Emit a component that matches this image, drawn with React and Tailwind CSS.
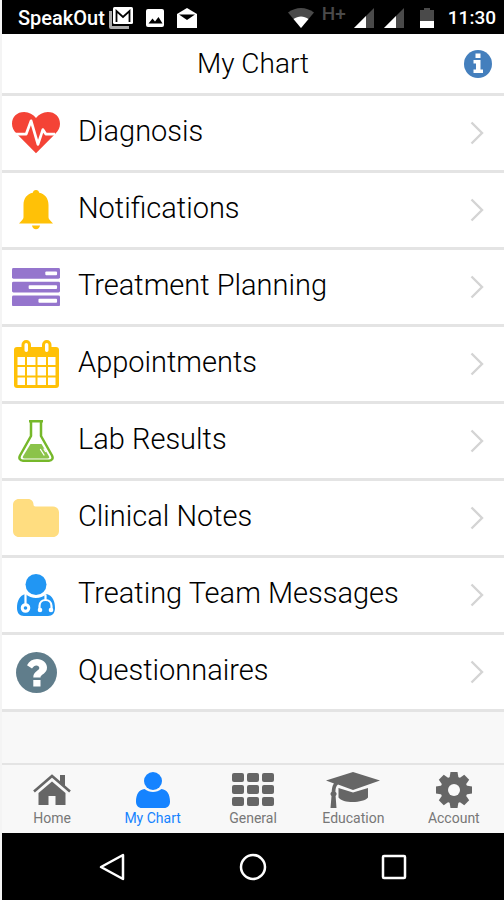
function InfoIcon() {
  return (
    <svg viewBox="0 0 28 28" className="w-7" aria-hidden="true">
      <circle cx="14" cy="14" r="14" fill="#447fbd" />
      <path fill="#fff" d="M11.500 3.500h5v4.500h-5zM9.500 10h7v9.500h2.500v3.500H9.500v-3.500h2.500v-6H9.500z" />
    </svg>
  );
}

function HeartIcon() {
  return (
    <svg viewBox="0 0 49 42" className="w-[49px]" aria-hidden="true">
      <path
        fill="#f44336"
        d="M24.500 42 5 22.500C1.500 19 0 16 0 12 0 5 5 0 12.500 0c5 0 9 2.500 12 6 3-3.500 7-6 12-6C44 0 49 5 49 12c0 4-1.500 7-5 10.500z"
      />
      <path
        fill="none"
        stroke="#fff"
        strokeWidth="2.800"
        strokeLinejoin="round"
        d="M2 22.500h12.500L19.500 9l7 24 5-15 3 4.500H44"
      />
    </svg>
  );
}

function BellIcon() {
  return (
    <svg viewBox="0 0 34 40" className="w-[34px]" aria-hidden="true">
      <path
        fill="#ffc107"
        d="M17 0c1.800 0 3 1.100 3.200 2.800C26 4 29.500 8.500 29.500 15v12c0 1.500.6 2.300 1.500 3.200l3 3.300H0l3-3.300c.9-.9 1.500-1.700 1.500-3.200V15C4.500 8.500 8 4 13.800 2.800 14 1.100 15.200 0 17 0zM13 35.500h8c-.3 2.200-2 3.700-4 3.700s-3.700-1.500-4-3.700z"
      />
    </svg>
  );
}

function TasksIcon() {
  return (
    <svg viewBox="0 0 49 39" className="w-[49px]" aria-hidden="true">
      <g fill="#9575cd">
        <rect width="49" height="11" rx="1.500" />
        <rect y="14" width="49" height="11" rx="1.500" />
        <rect y="28" width="49" height="11" rx="1.500" />
      </g>
      <g fill="#fff">
        <rect x="34" y="3.500" width="12" height="4" rx="1" />
        <rect x="17" y="17.500" width="29" height="4" rx="1" />
        <rect x="27" y="31.500" width="19" height="4" rx="1" />
      </g>
    </svg>
  );
}

function CalendarIcon() {
  return (
    <svg viewBox="0 0 45 48" className="w-[45px]" aria-hidden="true">
      <rect y="7" width="45" height="41" rx="3" fill="#ffc107" />
      <g fill="#fff" stroke="#ffc107" strokeWidth="3">
        <rect x="9" y="1.500" width="6.500" height="12" rx="3.200" />
        <rect x="29.500" y="1.500" width="6.500" height="12" rx="3.200" />
      </g>
      <g fill="#fff">
        <path d="M3.500 17h7.500v8H3.500zM13 17h8.500v8H13zM23.500 17h8.500v8h-8.500zM34 17h7.500v8H34z" />
        <path d="M3.500 27h7.500v8.500H3.500zM13 27h8.500v8.500H13zM23.500 27h8.500v8.500h-8.500zM34 27h7.500v8.500H34z" />
        <path d="M3.500 37.500h7.500V45H3.500zM13 37.500h8.500V45H13zM23.500 37.500h8.500V45h-8.500zM34 37.500h7.500V45H34z" />
      </g>
    </svg>
  );
}

function FlaskIcon() {
  return (
    <svg viewBox="0 0 36 42" className="w-9" aria-hidden="true">
      <path
        fill="none"
        stroke="#76b82a"
        strokeWidth="2.500"
        strokeLinejoin="round"
        d="M11 1.300h14M13 2v14L2 35.500c-1.500 3 0 5.200 3 5.200h26c3 0 4.500-2.200 3-5.200L23 16V2"
      />
      <path
        fill="#8bc34a"
        d="M12.500 24h11l7.300 12c1 1.700.3 2.500-1.300 2.500h-23c-1.600 0-2.300-.8-1.300-2.500z"
      />
      <path stroke="#fff" strokeWidth="1.300" strokeLinecap="round" d="m22.500 29.500 3.500 5.500M26 29l1.500 2.500" />
    </svg>
  );
}

function FolderIcon() {
  return (
    <svg viewBox="0 0 46 38" className="w-[46px]" aria-hidden="true">
      <path
        fill="#ffdd80"
        d="M6 0h9c3.500 0 5.500 2.500 5.500 5.500 0 1.300.7 2 2 2H40c3.500 0 6 2.500 6 6V32c0 3.500-2.500 6-6 6H6c-3.500 0-6-2.500-6-6V6c0-3.500 2.500-6 6-6z"
      />
    </svg>
  );
}

function DoctorIcon() {
  return (
    <svg viewBox="0 0 38 42" className="w-[38px]" aria-hidden="true">
      <g fill="#2196f3">
        <circle cx="19" cy="10.500" r="10.500" />
        <path d="M8.500 20c6 5.300 15 5.300 21 0 6 1.500 8.500 7 8.500 14 0 5-2.500 8-7 8H7c-4.500 0-7-3-7-8 0-7 2.500-12.500 8.500-14z" />
      </g>
      <g fill="none" stroke="#fff" strokeWidth="2.200">
        <path d="M8.500 20v11M28.500 20.500v5M22.500 36v-4c0-8 12-8 12 0v4" />
        <circle cx="8.500" cy="34" r="3.300" strokeWidth="3" />
      </g>
      <g fill="#fff">
        <circle cx="23" cy="36" r="2.300" />
        <circle cx="34" cy="36" r="2.300" />
      </g>
    </svg>
  );
}

function QuestionIcon() {
  return (
    <svg viewBox="0 0 41 41" className="w-[41px]" aria-hidden="true">
      <circle cx="20.500" cy="20.500" r="20.500" fill="#607d8b" />
      <path
        fill="#fff"
        d="M11 13.200C13.300 9 16.500 7 21 7c5.500 0 10 3.800 10 8.500 0 6.500-6.500 6.500-6.500 10h-7.200c0-6.500 6-6.500 6-9.500 0-1.500-1.300-2.500-2.900-2.500-1.900 0-2.900 1-4.400 3zM17.300 28h7.200v6.500h-7.200z"
      />
    </svg>
  );
}

function HomeIcon() {
  return (
    <svg viewBox="0 0 38 32" className="w-[38px]" fill="#666" aria-hidden="true">
      <path d="M27 1h5v12l-5-4.500z" />
      <path d="M19 7.500 5.500 19v12h10v-9h7v9h10V19z" />
      <path fill="none" stroke="#666" strokeWidth="2.600" d="M1 17.500 19 2l18 15.500" />
    </svg>
  );
}

function PersonIcon() {
  return (
    <svg viewBox="0 0 34 36" className="w-[34px]" fill="#1583ff" aria-hidden="true">
      <circle cx="17" cy="9" r="9" />
      <path d="M8.500 17c5 4 12 4 17 0C31 17.500 34 22.500 34 29.500c0 4-2.200 6.500-6 6.500H6c-3.800 0-6-2.500-6-6.500C0 22.500 3 17.500 8.500 17z" />
    </svg>
  );
}

function GridIcon() {
  return (
    <svg viewBox="0 0 42 34" className="w-[42px]" fill="#666" aria-hidden="true">
      {[0, 12, 24].map((y) =>
        [0, 15, 30].map((x) => (
          <rect key={`${x}-${y}`} x={x} y={y} width="12" height="9" rx="2" />
        ))
      )}
    </svg>
  );
}

function CapIcon() {
  return (
    <svg viewBox="0 0 54 36" className="w-[54px]" fill="#666" aria-hidden="true">
      <path d="M27 0 54 8.500 27 18 12 12.600c-2 1.500-2.500 4-2.600 7.200 1.600 1 1.600 3 .2 4.200L10.500 36H4.500l1-12c-1.400-1.200-1.400-3.200.2-4.200.1-3.500.8-6.500 2.300-8.400L0 8.500z" />
      <path d="M12.500 16 27 20.500 42 16v9.500c-4 5.500-25 6.500-29.500 0z" />
    </svg>
  );
}

function GearIcon() {
  return (
    <svg viewBox="-18 -18 36 36" className="w-9" aria-hidden="true">
      <g fill="#666">
        <circle r="13.500" />
        {[0, 45, 90, 135].map((a) => (
          <path key={a} transform={`rotate(${a})`} d="M-3.500-18h7l1 6v24l-1 6h-7l-1-6v-24z" />
        ))}
      </g>
      <circle r="6" fill="#f8f8f8" />
    </svg>
  );
}

function Signal() {
  return (
    <svg viewBox="0 0 20 20" className="w-5" aria-hidden="true">
      <path d="M20 0v20H0z" fill="#4a4a4a" />
      <path d="M12 8v12H0z" fill="#fff" />
    </svg>
  );
}

const items = [
  { label: "Diagnosis", Icon: HeartIcon },
  { label: "Notifications", Icon: BellIcon },
  { label: "Treatment Planning", Icon: TasksIcon },
  { label: "Appointments", Icon: CalendarIcon },
  { label: "Lab Results", Icon: FlaskIcon },
  { label: "Clinical Notes", Icon: FolderIcon },
  { label: "Treating Team Messages", Icon: DoctorIcon },
  { label: "Questionnaires", Icon: QuestionIcon },
];

const tabs = [
  { label: "Home", Icon: HomeIcon },
  { label: "My Chart", Icon: PersonIcon, active: true },
  { label: "General", Icon: GridIcon },
  { label: "Education", Icon: CapIcon },
  { label: "Account", Icon: GearIcon },
];

function StatusBar() {
  return (
    <div className="flex h-[34px] items-center justify-between bg-black pl-4 pr-2 pt-0.5 font-medium text-white">
      <div className="flex items-center">
        <span className="text-xl">SpeakOut</span>
        <svg viewBox="0 0 24 22" className="ml-1 w-6" aria-hidden="true">
          <path fill="#aaa" d="M0 4h3v15h17v3H2a2 2 0 0 1-2-2z" />
          <rect x="4" width="20" height="17" rx="1.500" fill="#fff" />
          <path fill="none" stroke="#000" strokeWidth="1.800" d="M7.500 15V4l6.500 6 6.500-6v11" />
        </svg>
        <svg viewBox="0 0 20 20" className="ml-3 w-5" aria-hidden="true">
          <rect x="1" y="1" width="18" height="18" rx="2" fill="#fff" />
          <path d="m3.500 15.500 4-5 2.500 3 3.500-4.500 4 6.500z" />
        </svg>
        <svg viewBox="0 0 20 20" className="ml-3 w-5" aria-hidden="true">
          <path fill="#fff" d="m10 0 10 6v14H0V6z" />
          <path d="M2 6.500h16L10 12z" />
        </svg>
      </div>
      <div className="flex items-center">
        <svg viewBox="0 0 26 20" className="w-[26px]" aria-hidden="true">
          <path fill="#4a4a4a" d="M0 4.500C8-1.500 18-1.500 26 4.500L13 20z" />
          <path fill="#fff" d="M5.500 11c4.500-3.500 10.500-3.500 15 0L13 20z" />
        </svg>
        <span className="ml-2 self-start text-[19px]/5 text-[#4a4a4a]">H+</span>
        <span className="ml-2 flex gap-2.5">
          <Signal />
          <Signal />
        </span>
        <svg viewBox="0 0 14 20" className="ml-4 w-3.5" aria-hidden="true">
          <path fill="#4a4a4a" d="M4 0h6v2h4v18H0V2h4z" />
          <path fill="#fff" d="M0 13h14v7H0z" />
        </svg>
        <span className="ml-3.5 text-[19px]">11:30</span>
      </div>
    </div>
  );
}

export default function App() {
  return (
    <div className="flex min-h-screen flex-col border-l-2 border-[#f4f4f4] bg-[#f8f8f8] font-['Roboto',sans-serif]">
      <StatusBar />
      <header className="grid h-[62px] grid-cols-[1fr_auto_1fr] items-center border-b-3 border-[#e4e4e4] bg-white px-3">
        <h1 className="col-start-2 text-[28px] font-light text-black">My Chart</h1>
        <button type="button" aria-label="Information" className="justify-self-end">
          <InfoIcon />
        </button>
      </header>

      <ul className="bg-white">
        {items.map(({ label, Icon }) => (
          <li key={label} className="border-b-3 border-[#e4e4e4]">
            <button type="button" className="flex h-[74px] w-full items-center pl-2.5 pr-5 text-left">
              <span className="flex w-12 justify-center">
                <Icon />
              </span>
              <span className="ml-[18px] grow pb-0.5 text-[29px] font-light text-black">{label}</span>
              <svg viewBox="0 0 14 24" className="w-3.5" aria-hidden="true">
                <path fill="none" stroke="#d4d4d4" strokeWidth="2.400" d="m1.500 1.500 10.500 10.500-10.500 10.500" />
              </svg>
            </button>
          </li>
        ))}
      </ul>

      <nav className="mt-auto grid grid-cols-5 border-t-2 border-[#e4e4e4]">
        {tabs.map(({ label, Icon, active }) => (
          <button
            key={label}
            type="button"
            aria-current={active ? "page" : undefined}
            className={`flex h-[68px] flex-col items-center pt-[7px] text-sm ${
              active ? "text-[#1583ff]" : "text-[#777]"
            }`}
          >
            <span className="flex h-9 items-center">
              <Icon />
            </span>
            {label}
          </button>
        ))}
      </nav>

      <div className="grid h-[67px] grid-cols-[1fr_auto_1fr] items-center gap-[114px] bg-black">
        <button type="button" aria-label="Back" className="justify-self-end">
          <svg viewBox="0 0 26 28" className="w-[26px]" aria-hidden="true">
            <path fill="none" stroke="#fff" strokeWidth="2.500" strokeLinejoin="round" d="M24 2v24L2 14z" />
          </svg>
        </button>
        <button type="button" aria-label="Home screen">
          <svg viewBox="0 0 28 28" className="w-7" aria-hidden="true">
            <circle cx="14" cy="14" r="12" fill="none" stroke="#fff" strokeWidth="2.500" />
          </svg>
        </button>
        <button type="button" aria-label="Recent apps" className="justify-self-start">
          <svg viewBox="0 0 26 26" className="w-[26px]" aria-hidden="true">
            <rect x="2" y="2" width="22" height="22" rx="1" fill="none" stroke="#fff" strokeWidth="2.500" />
          </svg>
        </button>
      </div>
    </div>
  );
}
